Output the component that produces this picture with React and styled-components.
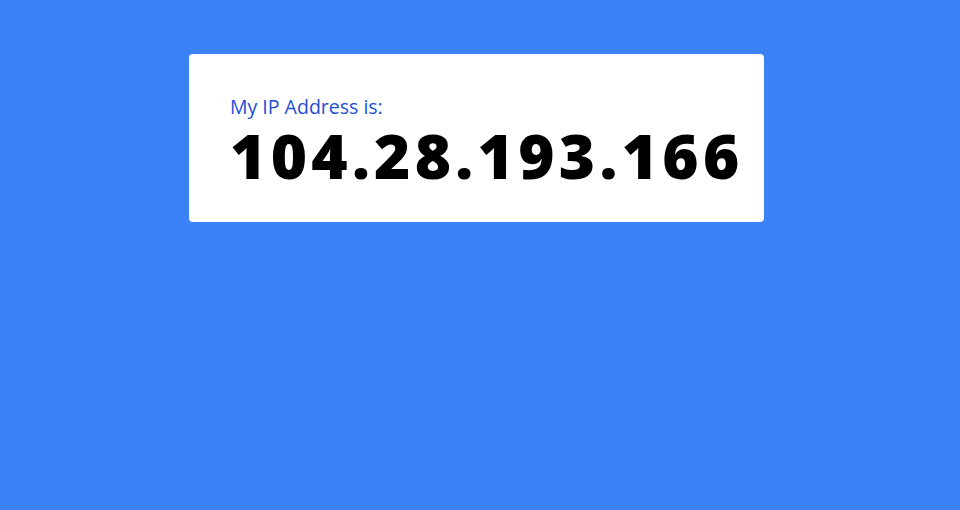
import React from "react";
import styled, { createGlobalStyle } from "styled-components";

const Global = createGlobalStyle`
  html, body { margin: 0; padding: 0; }
  body { background: #3b82f6; font-family: "Open Sans", "Noto Sans", sans-serif; }
`;

const Page = styled.div`
  min-height: 510px;
  display: flex;
  justify-content: center;
  align-items: flex-start;
  padding-top: 54px;
  box-sizing: border-box;
`;

const Card = styled.div`
  background: #ffffff;
  border-radius: 4px;
  width: 575px;
  height: 168px;
  box-sizing: border-box;
  padding: 40px 0 0 41px;
  margin-right: 7px;
`;

const Label = styled.div`
  color: #1d4ed8;
  font-size: 19.5px;
  line-height: 26px;
`;

const Ip = styled.div`
  color: #000;
  font-weight: 800;
  font-size: 62px;
  line-height: 70px;
  letter-spacing: 4.3px;
  white-space: nowrap;
`;

export default function App() {
  return (
    <>
      <Global />
      <Page>
        <Card>
          <Label>My IP Address is:</Label>
          <Ip>104.28.193.166</Ip>
        </Card>
      </Page>
    </>
  );
}
